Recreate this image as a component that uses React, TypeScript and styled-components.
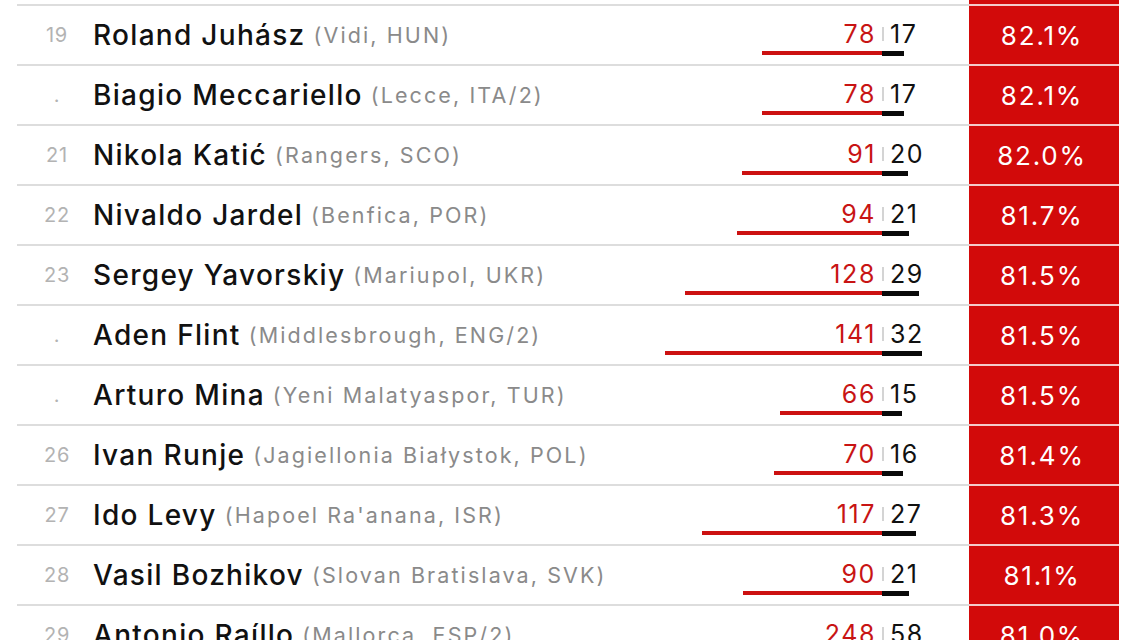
import * as React from 'react'
import styled, {createGlobalStyle} from 'styled-components'

const GlobalStyle = createGlobalStyle`
  html, body {
    margin: 0;
    padding: 0;
    background: #fff;
    overflow: hidden;
  }
  body {
    font-family: Inter, "Noto Sans", "Liberation Sans", sans-serif;
  }
`

interface Player {
  rank: string
  name: string
  club: string
  won: number
  lost: number
  pct: string
}

const players: Player[] = [
  {rank: '19', name: 'Roland Juhász', club: 'Vidi, HUN', won: 78, lost: 17, pct: '82.1%'},
  {rank: '.', name: 'Biagio Meccariello', club: 'Lecce, ITA/2', won: 78, lost: 17, pct: '82.1%'},
  {rank: '21', name: 'Nikola Katić', club: 'Rangers, SCO', won: 91, lost: 20, pct: '82.0%'},
  {rank: '22', name: 'Nivaldo Jardel', club: 'Benfica, POR', won: 94, lost: 21, pct: '81.7%'},
  {rank: '23', name: 'Sergey Yavorskiy', club: 'Mariupol, UKR', won: 128, lost: 29, pct: '81.5%'},
  {rank: '.', name: 'Aden Flint', club: 'Middlesbrough, ENG/2', won: 141, lost: 32, pct: '81.5%'},
  {rank: '.', name: 'Arturo Mina', club: 'Yeni Malatyaspor, TUR', won: 66, lost: 15, pct: '81.5%'},
  {rank: '26', name: 'Ivan Runje', club: 'Jagiellonia Białystok, POL', won: 70, lost: 16, pct: '81.4%'},
  {rank: '27', name: 'Ido Levy', club: "Hapoel Ra'anana, ISR", won: 117, lost: 27, pct: '81.3%'},
  {rank: '28', name: 'Vasil Bozhikov', club: 'Slovan Bratislava, SVK', won: 90, lost: 21, pct: '81.1%'},
  {rank: '29', name: 'Antonio Raíllo', club: 'Mallorca, ESP/2', won: 248, lost: 58, pct: '81.0%'},
]

const RED = '#d20a0a'

// Table layout
const Table = styled.div`
  margin-left: 17px;
  width: 1102px;
`

const Row = styled.div<{$stub?: boolean}>`
  display: grid;
  grid-template-columns: 76px minmax(0, 1fr) auto 87px 150px;
  height: ${({$stub}) => ($stub ? '4px' : '60px')};

  & > * {
    border-top: ${({$stub}) => ($stub ? '0' : '2px solid #dddddd')};
  }
`

const Rank = styled.div`
  padding-left: 4px;
  display: flex;
  align-items: center;
  justify-content: center;
  font-size: 20px;
  letter-spacing: 0.8px;
  color: #b3b3b3;
`

const NameCell = styled.div`
  display: flex;
  align-items: center;
  white-space: nowrap;
  padding-bottom: 1px;
`

const Name = styled.span`
  font-size: 28px;
  font-weight: 500;
  letter-spacing: 1.3px;
  color: #111;
`

const Club = styled.span`
  margin-left: 8px;
  font-size: 21.5px;
  letter-spacing: 2.1px;
  color: #8a8a8a;
`

const StatCell = styled.div<{$side: 'won' | 'lost'}>`
  display: flex;
  flex-direction: column;
  align-items: ${({$side}) => ($side === 'won' ? 'flex-end' : 'flex-start')};
  padding-top: 16px;
`

const Count = styled.div<{$side: 'won' | 'lost'}>`
  display: flex;
  align-items: center;
  height: 24px;
  font-size: 25px;
  line-height: 24px;
  letter-spacing: 1.6px;
  color: ${({$side}) => ($side === 'won' ? '#c81414' : '#111')};
  padding-right: ${({$side}) => ($side === 'won' ? '6px' : '0')};
`

const Tick = styled.span`
  width: 2px;
  height: 14px;
  margin-right: 6px;
  background: #d4d4d4;
`

const Bar = styled.div<{$side: 'won' | 'lost'}>`
  margin-top: 5px;
  height: ${({$side}) => ($side === 'won' ? '4px' : '5px')};
  background: ${({$side}) => ($side === 'won' ? '#cc1111' : '#0a0a0a')};
`

const Pct = styled.div`
  grid-column: 5;
  display: flex;
  align-items: center;
  justify-content: center;
  background: ${RED};
  color: #fff;
  font-size: 26px;
  letter-spacing: 1.8px;
  padding-right: 4px;

  && {
    border-top-color: #f4caca;
  }
`

function PlayerRow({player}: {player: Player}) {
  return (
    <Row>
      <Rank>{player.rank}</Rank>
      <NameCell>
        <Name>{player.name}</Name>
        <Club>({player.club})</Club>
      </NameCell>
      <StatCell $side="won">
        <Count $side="won">{player.won}</Count>
        <Bar $side="won" style={{width: player.won * 1.54}} />
      </StatCell>
      <StatCell $side="lost">
        <Count $side="lost">
          <Tick />
          {player.lost}
        </Count>
        <Bar $side="lost" style={{width: player.lost * 1.2 + 2}} />
      </StatCell>
      <Pct>{player.pct}</Pct>
    </Row>
  )
}

export default function App() {
  return (
    <>
      <GlobalStyle />
      <Table>
        <Row $stub>
          <Pct />
        </Row>
        {players.map((p, i) => (
          <PlayerRow key={i} player={p} />
        ))}
      </Table>
    </>
  )
}
